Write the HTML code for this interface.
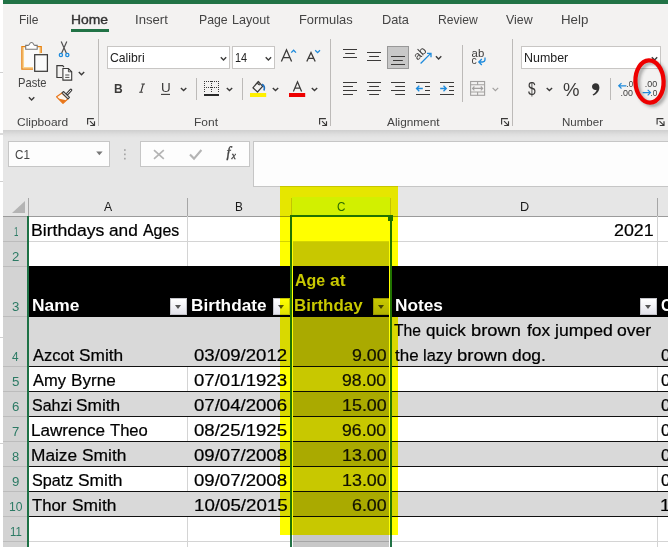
<!DOCTYPE html>
<html><head><meta charset="utf-8"><title>Excel</title>
<style>
html,body{margin:0;padding:0;}
html{width:668px;height:547px;overflow:hidden;background:#fff;}
body{width:668px;height:547px;position:relative;overflow:hidden;background:#fff;font-family:"Liberation Sans", sans-serif;}
.t{position:absolute;white-space:nowrap;line-height:1;font-family:"Liberation Sans", sans-serif;}
.a{position:absolute;}
#root{position:absolute;left:0;top:0;width:668px;height:547px;overflow:hidden;contain:paint;isolation:isolate;background:#fff;}
.bg{position:absolute;}
#titlebar{left:3px;top:0;width:665px;height:4px;background:#217346;}
#ribbon{left:3px;top:4px;width:665px;height:126px;background:#f3f2f1;}
#shadow{left:3px;top:130px;width:665px;height:8px;background:linear-gradient(#cfcfcf,#e0e0e0 60%,#e6e6e6);}
#fbar{left:3px;top:138px;width:665px;height:78px;background:#e6e6e6;}
.box{position:absolute;background:#fdfdfd;border:1px solid #c6c6c6;box-sizing:border-box;}
#namebox{left:8px;top:141px;width:102px;height:26px;}
#btnbox{left:140px;top:141px;width:110px;height:26px;}
#fxbox{left:253px;top:141px;width:415px;height:46px;border-right:none;}
#grid{left:29px;top:217px;width:639px;height:330px;background:#fff;}
.hl{position:absolute;background:#d4d4d4;height:1px;}
.vl{position:absolute;background:#d4d4d4;width:1px;}
.chs{position:absolute;width:1px;background:#a6a6a6;top:198px;height:18px;}
#rowhdr{left:3px;top:217px;width:24px;height:330px;background:#d3d3d3;}
.rl{position:absolute;left:3px;width:24px;height:1px;background:#bcbcbc;}
#greenl{left:27px;top:216px;width:2px;height:331px;background:#1e7145;}
.gray{position:absolute;left:29px;width:639px;background:#d9d9d9;}
.bl{position:absolute;left:29px;width:639px;height:1px;background:#111;}
.fb{position:absolute;width:17px;height:17px;box-sizing:border-box;border:1px solid #c3c3c8;background:linear-gradient(#ffffff,#f2f2f6 50%,#e2e2ea);}
.fb:after{content:"";position:absolute;left:3.7px;top:5.8px;border-left:3.8px solid transparent;border-right:3.8px solid transparent;border-top:4.3px solid #555;}
#sel{left:293px;top:242px;width:96px;height:305px;background:rgba(0,0,0,0.215);}
#chsel{left:292px;top:197px;width:98px;height:19px;background:#d2f0e0;}
.g{position:absolute;background:#217346;}
#yellow{left:280px;top:186px;width:118px;height:349px;background:#ffff00;mix-blend-mode:multiply;}
</style></head>
<body>
<div id="root">
<div class="bg" id="titlebar"></div>
<div class="bg" id="ribbon"></div>
<div class="bg" id="shadow"></div>
<div class="bg" id="fbar"></div>
<div class="bg" style="left:0;top:72px;width:3px;height:1px;background:#d0d0d0"></div>
<div class="bg" style="left:0;top:133px;width:3px;height:2px;background:#dadada"></div>
<div class="bg" style="left:0;top:181px;width:3px;height:1px;background:#d0d0d0"></div>
<div class="bg" style="left:0;top:337px;width:3px;height:1px;background:#d0d0d0"></div>
<div class="bg" style="left:0;top:443px;width:3px;height:1px;background:#d0d0d0"></div>
<div class="box" id="namebox"></div>
<div class="box" id="btnbox"></div>
<div class="box" id="fxbox"></div>
<!-- column header -->
<div class="bg" id="chsel"></div>
<div class="bg" style="left:3px;top:216px;width:665px;height:1px;background:#9b9b9b"></div>
<div class="chs" style="left:27.5px"></div>
<div class="chs" style="left:187px"></div>
<div class="chs" style="left:291px;background:#c4c4c4"></div>
<div class="chs" style="left:390px;background:#c4c4c4"></div>
<div class="chs" style="left:657px"></div>
<svg class="a" style="left:11px;top:201px" width="15" height="13"><path d="M14 0V12H1Z" fill="#b4b4b4"/></svg>
<!-- row headers -->
<div class="bg" id="rowhdr"></div>
<div class="rl" style="top:241px"></div><div class="rl" style="top:266px"></div><div class="rl" style="top:316px"></div>
<div class="rl" style="top:366px"></div><div class="rl" style="top:391px"></div><div class="rl" style="top:416px"></div>
<div class="rl" style="top:441px"></div><div class="rl" style="top:466px"></div><div class="rl" style="top:491px"></div>
<div class="rl" style="top:516px"></div><div class="rl" style="top:541px"></div>
<div class="bg" id="greenl"></div>
<!-- grid -->
<div class="bg" id="grid"></div>
<div class="hl" style="left:29px;top:241px;width:639px"></div>
<div class="hl" style="left:29px;top:541px;width:639px"></div>
<div class="vl" style="left:187px;top:216px;height:331px"></div>
<div class="vl" style="left:290px;top:216px;height:331px"></div>
<div class="vl" style="left:390px;top:216px;height:331px"></div>
<div class="vl" style="left:657px;top:216px;height:331px"></div>
<!-- table -->
<div class="bg" style="left:29px;top:266px;width:639px;height:51px;background:#000"></div>
<div class="gray" style="top:317px;height:49px"></div>
<div class="gray" style="top:392px;height:24px"></div>
<div class="gray" style="top:442px;height:24px"></div>
<div class="gray" style="top:492px;height:24px"></div>
<div class="bl" style="top:366px"></div><div class="bl" style="top:391px"></div><div class="bl" style="top:416px"></div>
<div class="bl" style="top:441px"></div><div class="bl" style="top:466px"></div><div class="bl" style="top:491px"></div>
<div class="bl" style="top:516px"></div>
<div class="fb" style="left:170px;top:298px"></div>
<div class="fb" style="left:273px;top:298px"></div>
<div class="fb" style="left:373px;top:298px"></div>
<div class="fb" style="left:640px;top:298px"></div>
<!-- selection -->
<div class="bg" id="sel"></div>
<div class="bg" style="left:292px;top:217px;width:1px;height:330px;background:#fff"></div>
<div class="bg" style="left:389px;top:221px;width:1px;height:326px;background:#fff"></div>
<div class="g" style="left:290px;top:215px;width:2px;height:332px"></div>
<div class="g" style="left:390px;top:215px;width:2px;height:332px"></div>
<div class="g" style="left:290px;top:215px;width:102px;height:2px"></div>
<div class="g" style="left:388px;top:215px;width:5px;height:6px;"></div>
<!-- RIBBON-SVG-START -->
<svg class="a" style="left:0;top:0" width="668" height="200" viewBox="0 0 668 200" fill="none" stroke-linecap="butt">
<defs>
<path id="chev" d="M-2.7 -1.3 L0 1.4 L2.7 -1.3" stroke="#3b3a39" stroke-width="1.35" fill="none"/>
<path id="launch" d="M0.6 6.6V0.6H6.9 M3 3.1L7.3 7.3 M7.5 3.2V7.5H3.2" stroke="#3b3a39" stroke-width="1.15" fill="none"/>
</defs>
<!-- Home underline -->
<rect x="71" y="29" width="38" height="3" fill="#217346"/>
<!-- group separators -->
<g stroke="#bcbab8" stroke-width="1">
<path d="M98.5 39V126 M330.5 39V126 M512.5 39V126"/>
<path d="M196.5 78V100 M242.5 78V100 M462.5 45V102 M610.5 78V100"/>
</g>
<!-- launchers -->
<use href="#launch" x="87" y="118"/><use href="#launch" x="319" y="118"/><use href="#launch" x="501" y="118"/><use href="#launch" x="656.5" y="118"/>
<!-- Paste icon -->
<rect x="22.6" y="47.4" width="18" height="21" fill="#fbfbfb" stroke="none"/>
<path d="M23.3 47.4V67.8H33 M40 47.4V53.4" stroke="#fbd28a" stroke-width="1.5"/>
<path d="M26 46.7H21.9V69.2H33 M37 46.7H41.2V53" stroke="#e8820e" stroke-width="1.3"/>
<path d="M25.7 49.2V45.4H28C30 45.4 28.9 42.5 31.5 42.5C34.1 42.5 33 45.4 35 45.4H37.2V49.2Z" fill="#fff" stroke="#777" stroke-width="1.1"/>
<rect x="34.7" y="54.7" width="12.7" height="16.6" fill="#fafafa" stroke="#3b3a39" stroke-width="1.25"/>
<use href="#chev" x="31.6" y="98.6"/>
<!-- Scissors -->
<path d="M61.2 41.6L66.4 53.2 M66.8 41.6L61.6 53.2" stroke="#505050" stroke-width="1.2"/>
<circle cx="60.9" cy="55" r="1.6" stroke="#1e8bdc" stroke-width="1.3"/>
<circle cx="67.3" cy="55" r="1.6" stroke="#1e8bdc" stroke-width="1.3"/>
<!-- Copy -->
<path d="M62 77.5H56.9V65.6H62.6L64 67" stroke="#3b3a39" stroke-width="1.2"/>
<path d="M62.9 68.5H68.4L71.7 71.8V80.1H62.9Z" fill="#fafafa" stroke="#3b3a39" stroke-width="1.1"/>
<path d="M68.4 68.5V71.8H71.7" stroke="#3b3a39" stroke-width="0.9"/>
<path d="M65.2 75H69.4 M65.2 77.4H69.4" stroke="#3b3a39" stroke-width="0.9"/>
<use href="#chev" x="81.5" y="73.4"/>
<!-- Format painter -->
<path d="M62 93L68 98.8L63 103.4L56.6 96.8Z" fill="#fdf6ee" stroke="#e8761a" stroke-width="1.2" stroke-linejoin="round"/>
<path d="M58.2 98.4L63 103.3L66.2 100.3Z" fill="#e8761a" stroke="none"/>
<path d="M63.5 91.5L69.5 97.3L68 98.9L62 93Z" fill="#f3f2f1" stroke="#444" stroke-width="1.1" stroke-linejoin="round"/>
<path d="M67.3 93.9L70.9 90.1" stroke="#444" stroke-width="2.9" stroke-linecap="round"/>
<path d="M67.5 93.7L70.7 90.3" stroke="#f3f2f1" stroke-width="0.9" stroke-linecap="round"/>
<!-- Font boxes -->
<rect x="107.5" y="46.5" width="122" height="22" fill="#fff" stroke="#c8c6c4"/>
<rect x="232.5" y="46.5" width="42" height="22" fill="#fff" stroke="#c8c6c4"/>
<use href="#chev" x="223.5" y="58.6"/><use href="#chev" x="268.4" y="58.6"/>
<!-- Grow / shrink font -->
<path d="M281.4 61.6L286.5 49.8L291.6 61.6 M283.2 57.6H289.8" stroke="#3b3a39" stroke-width="1.3"/>
<path d="M291.2 52.6L293.6 50.2L296 52.6" stroke="#1e8bdc" stroke-width="1.3"/>
<path d="M306.8 61.6L311 52.6L315.2 61.6 M308.3 58.4H313.7" stroke="#3b3a39" stroke-width="1.3"/>
<path d="M315.2 50.2L317.6 52.6L320 50.2" stroke="#1e8bdc" stroke-width="1.3"/>
<!-- I glyph -->
<path d="M141.4 84H145 M139.2 92.2H142.8 M143.3 84L140.9 92.2" stroke="#3b3a39" stroke-width="1.15"/>
<!-- U underline + chevrons row2 -->
<path d="M161 94.4H170" stroke="#3b3a39" stroke-width="1.1"/>
<use href="#chev" x="183.6" y="89.2"/>
<!-- Borders icon -->
<g stroke="#3b3a39" stroke-width="1" stroke-dasharray="1 1">
<path d="M204 81.5H219 M204 87.5H219 M204.5 81V93 M211.5 81V93 M218.5 81V93"/>
</g>
<path d="M204 95H219" stroke="#111" stroke-width="1.8"/>
<use href="#chev" x="229.5" y="89.2"/>
<!-- Fill color -->
<path d="M258.3 81.5L252.9 87.8L257.5 92L262.6 86.4Z M258.3 81.5C257 82.4 257.4 84 259.8 85" stroke="#3b3a39" stroke-width="1.2" stroke-linejoin="round"/>
<path d="M262 84.2C264.2 85.4 264.8 88 264 90.6" stroke="#1e6fbf" stroke-width="1.7"/>
<rect x="250" y="93" width="16.2" height="4" fill="#fff000"/>
<use href="#chev" x="275.5" y="89.2"/>
<!-- Font color -->
<path d="M293.4 91.4L297.5 81.8L301.6 91.4 M294.9 88.2H300.1" stroke="#3b3a39" stroke-width="1.25"/>
<rect x="289" y="93" width="16.2" height="4" fill="#ee0000"/>
<use href="#chev" x="314.5" y="89.2"/>
<!-- Alignment row 1 -->
<g stroke="#3b3a39" stroke-width="1.15">
<path d="M343 49.5H357 M345.2 53.5H354.8 M343 57.5H357"/>
<path d="M367 52.5H381 M369.2 56.5H379 M367 60.5H381"/>
</g>
<rect x="387.5" y="46.5" width="21" height="22" fill="#c8c8c8" stroke="#989898"/>
<g stroke="#3b3a39" stroke-width="1.15">
<path d="M391 56.5H405 M393 60.5H402.8 M391 64.5H405"/>
<!-- row 2 -->
<path d="M343 82.5H357 M343 86.5H353 M343 90.5H357 M343 94.5H353"/>
<path d="M367 82.5H381 M369.2 86.5H379 M367 90.5H381 M369.2 94.5H379"/>
<path d="M391 82.5H405 M395.2 86.5H405 M391 90.5H405 M395.2 94.5H405"/>
<path d="M416 82.5H430 M425 86.5H430 M425 90.5H430 M416 94.5H430"/>
<path d="M440 82.5H454 M449 86.5H454 M449 90.5H454 M440 94.5H454"/>
</g>
<g stroke="#1e8bdc" stroke-width="1.3">
<path d="M422.8 88.5H416.6 M419.3 85.7L416.5 88.5L419.3 91.3"/>
<path d="M440.2 88.5H446.2 M443.5 85.7L446.3 88.5L443.5 91.3"/>
</g>
<!-- Orientation -->
<g transform="translate(422.8,55.9) rotate(-45)"><text x="-7" y="0" font-family="Liberation Sans, sans-serif" font-size="11.5" fill="#3b3a39" stroke="none" textLength="13.4" lengthAdjust="spacingAndGlyphs">ab</text></g>
<path d="M420.6 63.5L430.5 53.6 M427 53.3H431V57.2" stroke="#1e8bdc" stroke-width="1.3"/>
<use href="#chev" x="438.6" y="57.6"/>
<!-- Wrap text -->
<text x="471.6" y="56.6" font-family="Liberation Sans, sans-serif" font-size="10.5" fill="#3b3a39" stroke="none" textLength="12.6" lengthAdjust="spacingAndGlyphs">ab</text>
<text x="471.6" y="64.2" font-family="Liberation Sans, sans-serif" font-size="10.5" fill="#3b3a39" stroke="none">c</text>
<path d="M485 57.6V59.6C485 61.6 484 62 482.6 62H479 M481.8 59L478.8 62L481.8 65" stroke="#1e8bdc" stroke-width="1.3"/>
<!-- Merge (disabled) -->
<g stroke="#a3a1a0" stroke-width="1.1">
<rect x="470.6" y="81.5" width="14" height="13.8" fill="#f3f2f1"/>
<path d="M470.6 84.8H484.6 M470.6 92H484.6 M477.6 81.5V84.8 M477.6 92V95.3"/>
<path d="M472.6 88.4H482.6 M474.4 86.5L472.5 88.4L474.4 90.3 M480.8 86.5L482.7 88.4L480.8 90.3"/>
</g>
<path d="M492.6 87.8L495.4 90.6L498.2 87.8" stroke="#a3a1a0" stroke-width="1.2"/>
<!-- Number box -->
<rect x="521.5" y="46.5" width="139" height="22" fill="#fff" stroke="#c8c6c4"/>
<use href="#chev" x="654.5" y="58.6"/>
<use href="#chev" x="549.4" y="89.2"/>
<!-- comma style -->
<path d="M595.6 83.2C597.8 83.2 599.4 84.8 599.4 87.4C599.4 91 597 94 593.2 95.4L592.6 94.4C595 93.2 596.4 91.6 596.6 89.8C596.3 89.9 596 90 595.5 90C593.5 90 592 88.6 592 86.7C592 84.7 593.6 83.2 595.6 83.2Z" fill="#333" stroke="none"/>
<!-- Increase decimal -->
<path d="M626.4 85.8H618.8 M621.5 83.1L618.7 85.8L621.5 88.5" stroke="#1e8bdc" stroke-width="1.15"/>
<text x="626.6" y="87.4" font-family="Liberation Sans, sans-serif" font-size="9.4" fill="#3b3a39" stroke="none" textLength="6.6" lengthAdjust="spacingAndGlyphs">.0</text>
<text x="620.6" y="95.6" font-family="Liberation Sans, sans-serif" font-size="9.4" fill="#3b3a39" stroke="none" textLength="12.4" lengthAdjust="spacingAndGlyphs">.00</text>
<!-- Decrease decimal -->
<text x="644.8" y="87.4" font-family="Liberation Sans, sans-serif" font-size="9.4" fill="#3b3a39" stroke="none" textLength="12.4" lengthAdjust="spacingAndGlyphs">.00</text>
<path d="M642.6 92.6H650.4 M647.7 89.9L650.5 92.6L647.7 95.3" stroke="#1e8bdc" stroke-width="1.15"/>
<text x="650.6" y="95.6" font-family="Liberation Sans, sans-serif" font-size="9.4" fill="#3b3a39" stroke="none" textLength="6.8" lengthAdjust="spacingAndGlyphs">.0</text>
<!-- Red ellipse annotation -->
<ellipse cx="652.2" cy="83.8" rx="14.1" ry="21.1" stroke="rgba(40,40,40,0.38)" stroke-width="4.2" transform="rotate(-2 652.2 83.8)" filter="url(#blur)"/>
<ellipse cx="649.5" cy="81.5" rx="14.1" ry="21.1" stroke="#ee0000" stroke-width="4.3" transform="rotate(-2 649.5 81.5)"/>
<defs><filter id="blur" x="-30%" y="-30%" width="160%" height="160%"><feGaussianBlur stdDeviation="1.8"/></filter></defs>
<!-- Formula bar icons -->
<path d="M96.2 151.4H102.6L99.4 155.3Z" fill="#777" stroke="none"/>
<g fill="#a6a6a6" stroke="none"><rect x="124" y="149.2" width="1.7" height="1.7"/><rect x="124" y="153.5" width="1.7" height="1.7"/><rect x="124" y="157.8" width="1.7" height="1.7"/></g>
<path d="M154 150.2L163.8 158.8 M163.8 150.2L154 158.8" stroke="#b4b4b4" stroke-width="1.7"/>
<path d="M190 154.6L194 158.6L201.4 150" stroke="#b4b4b4" stroke-width="2.1"/>
<text x="226.6" y="157.4" font-family="Liberation Serif, serif" font-style="italic" font-size="14.5" fill="#444" stroke="#444" stroke-width="0.35">f</text>
<text x="231.6" y="158.8" font-family="Liberation Serif, serif" font-style="italic" font-size="10" fill="#444" stroke="#444" stroke-width="0.3">x</text>
</svg>
<!-- RIBBON-SVG-END -->
<div class="bg" id="yellow"></div>

<!-- text -->
<span class="t" style="font-size:12.2px;color:#444444;top:14px;left:19.41px;transform-origin:0 0;transform:scaleX(0.9894);">File</span>
<span class="t" style="font-size:12.2px;-webkit-text-stroke:0.35px #333;color:#333;top:14px;left:71.17px;transform-origin:0 0;transform:scaleX(1.1384);">Home</span>
<span class="t" style="font-size:12.2px;color:#444444;top:14px;left:134.99px;transform-origin:0 0;transform:scaleX(1.0753);">Insert</span>
<span class="t" style="font-size:12.2px;color:#444444;top:14px;left:198.59px;transform-origin:0 0;transform:scaleX(1.0076);">Page</span>
<span class="t" style="font-size:12.2px;color:#444444;top:14px;left:231.87px;transform-origin:0 0;transform:scaleX(1.0314);">Layout</span>
<span class="t" style="font-size:12.2px;color:#444444;top:14px;left:299.34px;transform-origin:0 0;transform:scaleX(1.0577);">Formulas</span>
<span class="t" style="font-size:12.2px;color:#444444;top:14px;left:381.65px;transform-origin:0 0;transform:scaleX(1.0475);">Data</span>
<span class="t" style="font-size:12.2px;color:#444444;top:14px;left:437.70px;transform-origin:0 0;transform:scaleX(0.9951);">Review</span>
<span class="t" style="font-size:12.2px;color:#444444;top:14px;left:506.07px;transform-origin:0 0;transform:scaleX(1.0154);">View</span>
<span class="t" style="font-size:12.2px;color:#444444;top:14px;left:560.51px;transform-origin:0 0;transform:scaleX(1.0908);">Help</span>
<span class="t" style="font-size:12.2px;color:#444444;top:77px;left:17.58px;transform-origin:0 0;transform:scaleX(0.9175);">Paste</span>
<span class="t" style="font-size:11.5px;color:#444444;top:117px;left:16.96px;transform-origin:0 0;transform:scaleX(1.0399);">Clipboard</span>
<span class="t" style="font-size:11.5px;color:#444444;top:117px;left:193.66px;transform-origin:0 0;transform:scaleX(1.0419);">Font</span>
<span class="t" style="font-size:11.5px;color:#444444;top:117px;left:386.88px;transform-origin:0 0;transform:scaleX(1.0271);">Alignment</span>
<span class="t" style="font-size:11.5px;color:#444444;top:117px;left:561.69px;transform-origin:0 0;transform:scaleX(1.0036);">Number</span>
<span class="t" style="font-size:12.2px;color:#222;top:52px;left:109.94px;transform-origin:0 0;transform:scaleX(1.0027);">Calibri</span>
<span class="t" style="font-size:12.2px;color:#222;top:52px;left:235.28px;transform-origin:0 0;transform:scaleX(0.8906);">14</span>
<span class="t" style="font-size:12.2px;color:#222;top:52px;left:523.78px;transform-origin:0 0;transform:scaleX(1.0208);">Number</span>
<span class="t" style="font-size:13px;font-weight:bold;color:#3b3a39;top:82px;left:113.88px;transform-origin:0 0;transform:scaleX(0.9241);">B</span>
<span class="t" style="font-size:12px;color:#3b3a39;top:82px;left:160.70px;transform-origin:0 0;transform:scaleX(1.1217);">U</span>
<span class="t" style="font-size:17.5px;color:#3b3a39;top:81px;left:527.76px;transform-origin:0 0;transform:scaleX(0.7914);">$</span>
<span class="t" style="font-size:18.5px;color:#3b3a39;top:81px;left:562.57px;transform-origin:0 0;transform:scaleX(1.0019);">%</span>
<span class="t" style="font-size:12.5px;color:#444;top:149px;left:15.45px;transform-origin:0 0;transform:scaleX(0.9340);">C1</span>
<span class="t" style="font-size:16.8px;-webkit-text-stroke:0.22px #000;color:#000;top:223px;left:31.41px;transform-origin:0 0;transform:scaleX(1.0489);">Birthdays</span>
<span class="t" style="font-size:16.8px;-webkit-text-stroke:0.22px #000;color:#000;top:223px;left:108.93px;transform-origin:0 0;transform:scaleX(1.0277);">and</span>
<span class="t" style="font-size:16.8px;-webkit-text-stroke:0.22px #000;color:#000;top:223px;left:142.58px;transform-origin:0 0;transform:scaleX(0.9463);">Ages</span>
<span class="t" style="font-size:16.8px;-webkit-text-stroke:0.22px #000;color:#000;top:223px;left:614.32px;transform-origin:0 0;transform:scaleX(1.0624);">2021</span>
<span class="t" style="font-size:16.8px;font-weight:bold;color:#fff;top:298px;left:31.86px;transform-origin:0 0;transform:scaleX(1.0363);">Name</span>
<span class="t" style="font-size:16.8px;font-weight:bold;color:#fff;top:298px;left:191.37px;transform-origin:0 0;transform:scaleX(1.0250);">Birthdate</span>
<span class="t" style="font-size:16.8px;font-weight:bold;color:#c8c800;top:273px;left:294.91px;transform-origin:0 0;transform:scaleX(0.9518);">Age</span>
<span class="t" style="font-size:16.8px;font-weight:bold;color:#c8c800;top:273px;left:329.94px;transform-origin:0 0;transform:scaleX(1.0452);">at</span>
<span class="t" style="font-size:16.8px;font-weight:bold;color:#c8c800;top:298px;left:294.39px;transform-origin:0 0;transform:scaleX(1.0075);">Birthday</span>
<span class="t" style="font-size:16.8px;font-weight:bold;color:#fff;top:298px;left:394.57px;transform-origin:0 0;transform:scaleX(1.0289);">Notes</span>
<span class="t" style="font-size:16.8px;font-weight:bold;color:#fff;top:298px;left:661.02px;transform-origin:0 0;transform:scaleX(0.9237);">C</span>
<span class="t" style="font-size:16.8px;-webkit-text-stroke:0.22px #000;color:#000;top:323px;left:394.47px;transform-origin:0 0;transform:scaleX(0.9337);">The</span>
<span class="t" style="font-size:16.8px;-webkit-text-stroke:0.22px #000;color:#000;top:323px;left:426.19px;transform-origin:0 0;transform:scaleX(1.0114);">quick</span>
<span class="t" style="font-size:16.8px;-webkit-text-stroke:0.22px #000;color:#000;top:323px;left:471.11px;transform-origin:0 0;transform:scaleX(1.0899);">brown</span>
<span class="t" style="font-size:16.8px;-webkit-text-stroke:0.22px #000;color:#000;top:323px;left:526.68px;transform-origin:0 0;transform:scaleX(1.0375);">fox</span>
<span class="t" style="font-size:16.8px;-webkit-text-stroke:0.22px #000;color:#000;top:323px;left:555.25px;transform-origin:0 0;transform:scaleX(1.0486);">jumped</span>
<span class="t" style="font-size:16.8px;-webkit-text-stroke:0.22px #000;color:#000;top:323px;left:616.97px;transform-origin:0 0;transform:scaleX(1.0478);">over</span>
<span class="t" style="font-size:16.8px;-webkit-text-stroke:0.22px #000;color:#000;top:348px;left:394.56px;transform-origin:0 0;transform:scaleX(1.0093);">the</span>
<span class="t" style="font-size:16.8px;-webkit-text-stroke:0.22px #000;color:#000;top:348px;left:422.52px;transform-origin:0 0;transform:scaleX(0.9761);">lazy</span>
<span class="t" style="font-size:16.8px;-webkit-text-stroke:0.22px #000;color:#000;top:348px;left:457.00px;transform-origin:0 0;transform:scaleX(1.0990);">brown</span>
<span class="t" style="font-size:16.8px;-webkit-text-stroke:0.22px #000;color:#000;top:348px;left:512.08px;transform-origin:0 0;transform:scaleX(1.0370);">dog.</span>
<span class="t" style="font-size:16.8px;-webkit-text-stroke:0.22px #000;color:#000;top:348px;left:32.57px;transform-origin:0 0;transform:scaleX(0.9797);">Azcot</span>
<span class="t" style="font-size:16.8px;-webkit-text-stroke:0.22px #000;color:#000;top:348px;left:78.99px;transform-origin:0 0;transform:scaleX(1.0289);">Smith</span>
<span class="t" style="font-size:16.8px;-webkit-text-stroke:0.22px #000;color:#000;top:348px;left:194.20px;transform-origin:0 0;transform:scaleX(1.1094);">03/09/2012</span>
<span class="t" style="font-size:16.8px;-webkit-text-stroke:0.22px #111100;color:#111100;top:348px;left:352.28px;transform-origin:0 0;transform:scaleX(1.0585);">9.00</span>
<span class="t" style="font-size:16.8px;-webkit-text-stroke:0.22px #000;color:#000;top:348px;left:660.95px;transform-origin:0 0;transform:scaleX(1.0077);">0</span>
<span class="t" style="font-size:16.8px;-webkit-text-stroke:0.22px #000;color:#000;top:373px;left:32.57px;transform-origin:0 0;transform:scaleX(0.9811);">Amy</span>
<span class="t" style="font-size:16.8px;-webkit-text-stroke:0.22px #000;color:#000;top:373px;left:70.94px;transform-origin:0 0;transform:scaleX(1.0219);">Byrne</span>
<span class="t" style="font-size:16.8px;-webkit-text-stroke:0.22px #000;color:#000;top:373px;left:194.20px;transform-origin:0 0;transform:scaleX(1.1079);">07/01/1923</span>
<span class="t" style="font-size:16.8px;-webkit-text-stroke:0.22px #111100;color:#111100;top:373px;left:342.49px;transform-origin:0 0;transform:scaleX(1.0522);">98.00</span>
<span class="t" style="font-size:16.8px;-webkit-text-stroke:0.22px #000;color:#000;top:373px;left:660.95px;transform-origin:0 0;transform:scaleX(1.0077);">0</span>
<span class="t" style="font-size:16.8px;-webkit-text-stroke:0.22px #000;color:#000;top:398px;left:31.94px;transform-origin:0 0;transform:scaleX(0.9547);">Sahzi</span>
<span class="t" style="font-size:16.8px;-webkit-text-stroke:0.22px #000;color:#000;top:398px;left:76.49px;transform-origin:0 0;transform:scaleX(1.0289);">Smith</span>
<span class="t" style="font-size:16.8px;-webkit-text-stroke:0.22px #000;color:#000;top:398px;left:194.20px;transform-origin:0 0;transform:scaleX(1.1079);">07/04/2006</span>
<span class="t" style="font-size:16.8px;-webkit-text-stroke:0.22px #111100;color:#111100;top:398px;left:341.95px;transform-origin:0 0;transform:scaleX(1.0650);">15.00</span>
<span class="t" style="font-size:16.8px;-webkit-text-stroke:0.22px #000;color:#000;top:398px;left:660.95px;transform-origin:0 0;transform:scaleX(1.0077);">0</span>
<span class="t" style="font-size:16.8px;-webkit-text-stroke:0.22px #000;color:#000;top:423px;left:31.44px;transform-origin:0 0;transform:scaleX(1.0186);">Lawrence</span>
<span class="t" style="font-size:16.8px;-webkit-text-stroke:0.22px #000;color:#000;top:423px;left:110.06px;transform-origin:0 0;transform:scaleX(0.9892);">Theo</span>
<span class="t" style="font-size:16.8px;-webkit-text-stroke:0.22px #000;color:#000;top:423px;left:194.20px;transform-origin:0 0;transform:scaleX(1.1075);">08/25/1925</span>
<span class="t" style="font-size:16.8px;-webkit-text-stroke:0.22px #111100;color:#111100;top:423px;left:342.49px;transform-origin:0 0;transform:scaleX(1.0522);">96.00</span>
<span class="t" style="font-size:16.8px;-webkit-text-stroke:0.22px #000;color:#000;top:423px;left:660.95px;transform-origin:0 0;transform:scaleX(1.0077);">0</span>
<span class="t" style="font-size:16.8px;-webkit-text-stroke:0.22px #000;color:#000;top:448px;left:31.43px;transform-origin:0 0;transform:scaleX(1.0306);">Maize</span>
<span class="t" style="font-size:16.8px;-webkit-text-stroke:0.22px #000;color:#000;top:448px;left:81.58px;transform-origin:0 0;transform:scaleX(1.0338);">Smith</span>
<span class="t" style="font-size:16.8px;-webkit-text-stroke:0.22px #000;color:#000;top:448px;left:194.20px;transform-origin:0 0;transform:scaleX(1.1077);">09/07/2008</span>
<span class="t" style="font-size:16.8px;-webkit-text-stroke:0.22px #111100;color:#111100;top:448px;left:341.95px;transform-origin:0 0;transform:scaleX(1.0650);">13.00</span>
<span class="t" style="font-size:16.8px;-webkit-text-stroke:0.22px #000;color:#000;top:448px;left:660.95px;transform-origin:0 0;transform:scaleX(1.0077);">0</span>
<span class="t" style="font-size:16.8px;-webkit-text-stroke:0.22px #000;color:#000;top:473px;left:31.93px;transform-origin:0 0;transform:scaleX(0.9636);">Spatz</span>
<span class="t" style="font-size:16.8px;-webkit-text-stroke:0.22px #000;color:#000;top:473px;left:77.68px;transform-origin:0 0;transform:scaleX(1.0362);">Smith</span>
<span class="t" style="font-size:16.8px;-webkit-text-stroke:0.22px #000;color:#000;top:473px;left:194.20px;transform-origin:0 0;transform:scaleX(1.1077);">09/07/2008</span>
<span class="t" style="font-size:16.8px;-webkit-text-stroke:0.22px #111100;color:#111100;top:473px;left:341.95px;transform-origin:0 0;transform:scaleX(1.0650);">13.00</span>
<span class="t" style="font-size:16.8px;-webkit-text-stroke:0.22px #000;color:#000;top:473px;left:660.95px;transform-origin:0 0;transform:scaleX(1.0077);">0</span>
<span class="t" style="font-size:16.8px;-webkit-text-stroke:0.22px #000;color:#000;top:498px;left:32.46px;transform-origin:0 0;transform:scaleX(0.9963);">Thor</span>
<span class="t" style="font-size:16.8px;-webkit-text-stroke:0.22px #000;color:#000;top:498px;left:71.88px;transform-origin:0 0;transform:scaleX(1.0338);">Smith</span>
<span class="t" style="font-size:16.8px;-webkit-text-stroke:0.22px #000;color:#000;top:498px;left:193.51px;transform-origin:0 0;transform:scaleX(1.1158);">10/05/2015</span>
<span class="t" style="font-size:16.8px;-webkit-text-stroke:0.22px #111100;color:#111100;top:498px;left:352.18px;transform-origin:0 0;transform:scaleX(1.0616);">6.00</span>
<span class="t" style="font-size:16.8px;-webkit-text-stroke:0.22px #000;color:#000;top:498px;left:660.23px;transform-origin:0 0;transform:scaleX(1.1005);">1</span>
<span class="t" style="font-size:12px;color:#1a1a1a;top:201px;left:103.88px;transform-origin:0 0;transform:scaleX(1.0184);">A</span>
<span class="t" style="font-size:12px;color:#1a1a1a;top:201px;left:235.42px;transform-origin:0 0;transform:scaleX(0.9793);">B</span>
<span class="t" style="font-size:12px;color:#2a6a00;top:201px;left:337.06px;transform-origin:0 0;transform:scaleX(0.9720);">C</span>
<span class="t" style="font-size:12px;color:#1a1a1a;top:201px;left:519.64px;transform-origin:0 0;transform:scaleX(1.0576);">D</span>
<span class="t" style="font-size:12px;color:#2b7a64;top:226px;left:13.67px;transform-origin:0 0;transform:scaleX(0.6528);">1</span>
<span class="t" style="font-size:12px;color:#2b7a64;top:251px;left:11.80px;transform-origin:0 0;transform:scaleX(1.0987);">2</span>
<span class="t" style="font-size:12px;color:#2b7a64;top:301px;left:11.75px;transform-origin:0 0;transform:scaleX(1.0997);">3</span>
<span class="t" style="font-size:12px;color:#2b7a64;top:351px;left:12.25px;transform-origin:0 0;transform:scaleX(0.9841);">4</span>
<span class="t" style="font-size:12px;color:#2b7a64;top:376px;left:11.67px;transform-origin:0 0;transform:scaleX(1.1115);">5</span>
<span class="t" style="font-size:12px;color:#2b7a64;top:401px;left:11.78px;transform-origin:0 0;transform:scaleX(1.1016);">6</span>
<span class="t" style="font-size:12px;color:#2b7a64;top:426px;left:11.83px;transform-origin:0 0;transform:scaleX(1.0938);">7</span>
<span class="t" style="font-size:12px;color:#2b7a64;top:451px;left:11.88px;transform-origin:0 0;transform:scaleX(1.0785);">8</span>
<span class="t" style="font-size:12px;color:#2b7a64;top:476px;left:11.78px;transform-origin:0 0;transform:scaleX(1.1016);">9</span>
<span class="t" style="font-size:12px;color:#2b7a64;top:501px;left:9.49px;transform-origin:0 0;transform:scaleX(1.0099);">10</span>
<span class="t" style="font-size:12px;color:#2b7a64;top:526px;left:10.14px;transform-origin:0 0;transform:scaleX(0.9470);">11</span>
</div>
</body></html>
